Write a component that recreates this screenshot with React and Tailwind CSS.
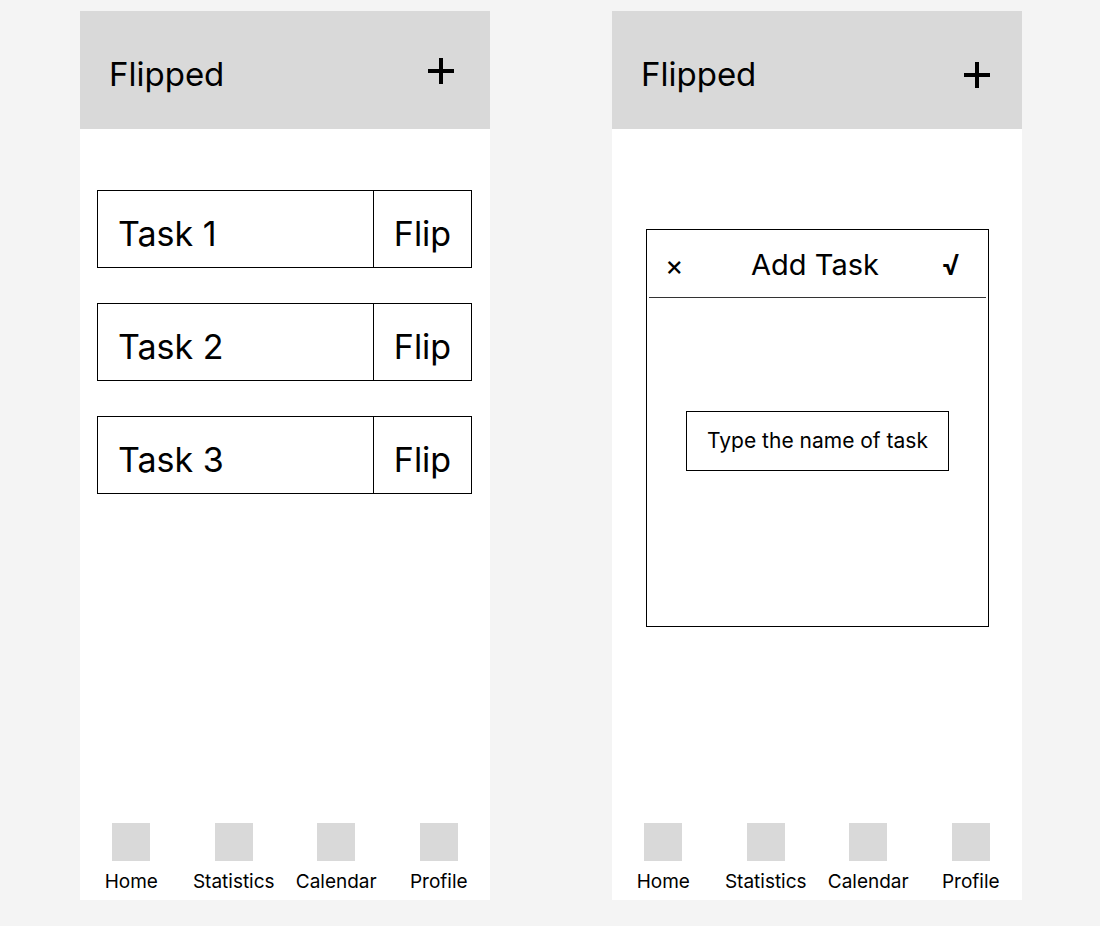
import React from "react";

const font = { fontFamily: "Inter, 'Liberation Sans', sans-serif" };

function Header({ plusClass }) {
  return (
    <div className="h-[118px] bg-[#d9d9d9] flex items-center justify-between pl-[29px] shrink-0">
      <span className="text-[33px] leading-none text-black mt-[8px]">Flipped</span>
      <svg className={plusClass} width="26" height="26" viewBox="0 0 26 26">
        <rect x="11" y="0" width="4" height="26" fill="#000" />
        <rect x="0" y="11" width="26" height="4" fill="#000" />
      </svg>
    </div>
  );
}

function Nav() {
  const items = ["Home", "Statistics", "Calendar", "Profile"];
  return (
    <div className="mt-auto grid grid-cols-4 pb-[9px]">
      {items.map((t) => (
        <div key={t} className="flex flex-col items-center">
          <div className="w-[38px] h-[38px] bg-[#d9d9d9]" />
          <span className="text-[19px] leading-none mt-[11px] text-black">{t}</span>
        </div>
      ))}
    </div>
  );
}

function Task({ name }) {
  return (
    <div className="h-[78px] border border-black flex">
      <div className="flex-1 flex items-center pl-[20px] pt-[8px] text-[34px] text-black">{name}</div>
      <div className="w-[98px] border-l border-black flex items-center justify-center pt-[8px] text-[34px] text-black">Flip</div>
    </div>
  );
}

export default function App() {
  return (
    <div className="min-h-[926px] bg-[#f4f4f4] flex gap-[122px] pl-[80px] pt-[11px]" style={font}>
      <div className="w-[410px] h-[889px] bg-white flex flex-col">
        <Header plusClass="mr-[36px] mt-[2px]" />
        <div className="flex flex-col gap-[35px] pt-[61px] pl-[17px] pr-[18px]">
          <Task name="Task 1" />
          <Task name="Task 2" />
          <Task name="Task 3" />
        </div>
        <Nav />
      </div>
      <div className="w-[410px] h-[889px] bg-white flex flex-col">
        <Header plusClass="mr-[32px] mt-[10px]" />
        <div className="pt-[100px] pl-[34px] pr-[33px]">
          <div className="h-[398px] border border-black flex flex-col">
            <div className="h-[67px] flex items-center justify-between relative px-[18px] pt-[2px]">
              <span className="text-[28px] leading-none text-black">×</span>
              <span className="text-[29px] leading-none text-black absolute left-0 right-[5px] text-center pointer-events-none">Add Task</span>
              <span className="text-[28px] leading-none font-semibold text-black mr-[10px]">√</span>
            </div>
            <div className="mx-[2px] h-px bg-[#333]" />
            <div className="flex justify-center pt-[113px]">
              <div className="w-[263px] h-[60px] border border-black flex items-center justify-center text-[21px] text-black">
                Type the name of task
              </div>
            </div>
          </div>
        </div>
        <Nav />
      </div>
    </div>
  );
}
